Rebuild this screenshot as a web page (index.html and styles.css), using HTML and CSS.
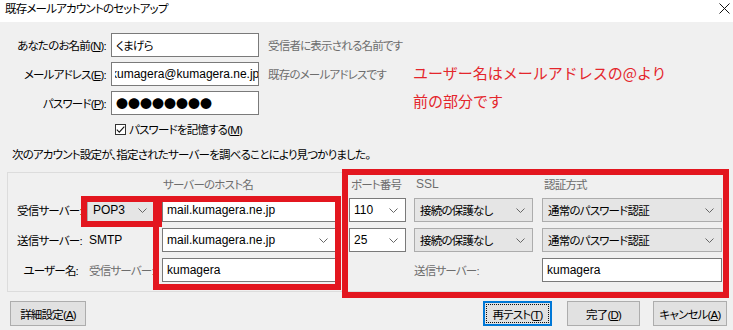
FILE: index.html
```html
<!DOCTYPE html>
<html lang="ja">
<head>
<meta charset="utf-8">
<title>既存メールアカウントのセットアップ</title>
<link rel="stylesheet" href="styles.css">
</head>
<body>
<div class="titlebar">
  <span class="title ja">既存メールアカウントのセットアップ</span>
  <svg class="close" width="11" height="11" viewBox="0 0 11 11"><path d="M0.5 0.5L10.5 10.5M10.5 0.5L0.5 10.5" stroke="#111" stroke-width="1"/></svg>
</div>
<div class="content">
  <div class="identity">
    <label class="lbl ja">あなたのお名前(<u>N</u>):</label>
    <div class="field"><span class="ja">くまげら</span></div>
    <span class="hint ja">受信者に表示される名前です</span>
    <label class="lbl ja">メールアドレス(<u>E</u>):</label>
    <div class="field email"><span class="clip"><span class="scrolled">kumagera@kumagera.ne.jp</span></span></div>
    <span class="hint ja">既存のメールアドレスです</span>
    <label class="lbl ja">パスワード(<u>P</u>):</label>
    <div class="field dots">●●●●●●●●</div>
    <span></span>
  </div>
  <div class="remember">
    <span class="check"><svg width="9" height="9" viewBox="0 0 9 9"><path d="M0.8 4.6L3.3 7.1L8.3 1.6" fill="none" stroke="#111" stroke-width="1.1"/></svg></span>
    <span class="ja">パスワードを記憶する(<u>M</u>)</span>
  </div>
  <p class="found ja">次のアカウント設定が、指定されたサーバーを調べることにより見つかりました。</p>
  <div class="panel">
    <span></span><span></span>
    <span class="head ja">サーバーのホスト名</span>
    <span class="head ja port-h">ポート番号</span>
    <span class="head ssl-h">SSL</span>
    <span class="head ja auth-h">認証方式</span>

    <span class="plbl ja">受信サーバー:</span>
    <div class="sel gray"><span>POP3</span><svg class="chev" width="9" height="5" viewBox="0 0 9 5"><path d="M0.5 0.5L4.5 4.5L8.5 0.5" fill="none" stroke="#666" stroke-width="1"/></svg></div>
    <div class="field host">mail.kumagera.ne.jp</div>
    <div class="sel white port"><span>110</span><svg class="chev" width="9" height="5" viewBox="0 0 9 5"><path d="M0.5 0.5L4.5 4.5L8.5 0.5" fill="none" stroke="#666" stroke-width="1"/></svg></div>
    <div class="sel gray ssl"><span class="ja">接続の保護なし</span><svg class="chev" width="9" height="5" viewBox="0 0 9 5"><path d="M0.5 0.5L4.5 4.5L8.5 0.5" fill="none" stroke="#666" stroke-width="1"/></svg></div>
    <div class="sel gray"><span class="ja">通常のパスワード認証</span><svg class="chev" width="9" height="5" viewBox="0 0 9 5"><path d="M0.5 0.5L4.5 4.5L8.5 0.5" fill="none" stroke="#666" stroke-width="1"/></svg></div>

    <span class="plbl ja">送信サーバー:</span>
    <span class="ptype">SMTP</span>
    <div class="sel white host"><span>mail.kumagera.ne.jp</span><svg class="chev" width="9" height="5" viewBox="0 0 9 5"><path d="M0.5 0.5L4.5 4.5L8.5 0.5" fill="none" stroke="#666" stroke-width="1"/></svg></div>
    <div class="sel white port"><span>25</span><svg class="chev" width="9" height="5" viewBox="0 0 9 5"><path d="M0.5 0.5L4.5 4.5L8.5 0.5" fill="none" stroke="#666" stroke-width="1"/></svg></div>
    <div class="sel gray ssl"><span class="ja">接続の保護なし</span><svg class="chev" width="9" height="5" viewBox="0 0 9 5"><path d="M0.5 0.5L4.5 4.5L8.5 0.5" fill="none" stroke="#666" stroke-width="1"/></svg></div>
    <div class="sel gray"><span class="ja">通常のパスワード認証</span><svg class="chev" width="9" height="5" viewBox="0 0 9 5"><path d="M0.5 0.5L4.5 4.5L8.5 0.5" fill="none" stroke="#666" stroke-width="1"/></svg></div>

    <span class="plbl ja">ユーザー名:</span>
    <span class="ptype ja muted">受信サーバー:</span>
    <div class="field host">kumagera</div>
    <span></span>
    <span class="ptype ja muted ssl-l">送信サーバー:</span>
    <div class="field">kumagera</div>
  </div>
  <div class="buttons">
    <button class="btn adv"><span class="ja">詳細設定(<u>A</u>)</span></button>
    <span class="spacer"></span>
    <button class="btn focus retest"><span class="ja">再テスト(<u>T</u>)</span></button>
    <button class="btn done"><span class="ja">完了(<u>D</u>)</span></button>
    <button class="btn cancel"><span class="ja">キャンセル(<u>A</u>)</span></button>
  </div>
</div>
<div class="note">ユーザー名はメールアドレスの@より<br>前の部分です</div>
<div class="mark m1"></div>
<div class="mark m2"></div>
<div class="mark m3"></div>
</body>
</html>
```

FILE: styles.css
```css
* { box-sizing: border-box; }
html, body { margin: 0; padding: 0; }
body {
  position: relative;
  width: 733px;
  height: 330px;
  overflow: hidden;
  background: #f0f0f0;
  color: #000;
  font-family: "Liberation Sans", "Noto Sans CJK JP", sans-serif;
  font-size: 12px;
}
u { text-decoration: underline; text-underline-offset: 1px; }

.ja {
  font-size: 11.5px;
  letter-spacing: -0.8px;
  font-feature-settings: "palt";
}

.titlebar {
  height: 22px;
  background: #fff;
  display: flex;
  align-items: center;
  justify-content: space-between;
  padding: 0 3px 0 5px;
}
.title { line-height: 16px; margin-top: -4px; }
.close { margin-top: -5px; }

.content { padding: 11px 5px 0 7px; }

.identity {
  display: grid;
  grid-template-columns: 100px 148px auto;
  grid-auto-rows: 24px;
  column-gap: 4px;
  row-gap: 5px;
  align-items: center;
}
.lbl { text-align: right; white-space: nowrap; padding-right: 1px; }
.hint { color: #6d6d6d; margin-left: 5px; }

.field {
  height: 24px;
  background: #fff;
  border: 1px solid #7a7a7a;
  display: flex;
  align-items: center;
  padding-left: 4px;
  overflow: hidden;
  white-space: nowrap;
}
.field.email { padding-left: 3px; }
.clip { display: flex; overflow: hidden; flex: 1; }
.scrolled { margin-left: -4px; white-space: nowrap; }
.dots {
  font-family: "Noto Sans CJK JP", sans-serif;
  font-size: 12px;
  padding-left: 4px;
}

.remember {
  display: flex;
  align-items: center;
  height: 18px;
  margin: 5px 0 0 108px;
  gap: 3px;
}
.check {
  width: 11px;
  height: 11px;
  border: 1px solid #333;
  background: #fff;
  display: flex;
  align-items: center;
  justify-content: center;
}

.found { margin: 8px 0 0 5px; line-height: 18px; }

.panel {
  margin-top: 8px;
  border: 1px solid #dcdcdc;
  padding: 3px 5px 9px 9px;
  display: grid;
  grid-template-columns: 63px 68px 180px 57px 122px 180px;
  grid-template-rows: 16px 24px 24px 24px;
  column-gap: 7px;
  row-gap: 6px;
  align-items: center;
}
.head { color: #6d6d6d; white-space: nowrap; padding-left: 1px; }
.port-h { padding-left: 2px; }
.ssl-h { padding-left: 3px; }
.auth-h { padding-left: 2px; }
.plbl { text-align: right; padding-right: 2px; white-space: nowrap; }
.ptype { padding-left: 2px; white-space: nowrap; }
.muted { color: #6d6d6d; }
.ssl-l { padding-left: 1px; }
.host { width: 174px; }

.sel {
  height: 24px;
  display: flex;
  align-items: center;
  justify-content: space-between;
  padding: 0 7px 0 5px;
  white-space: nowrap;
}
.sel.gray { background: #e5e5e5; border: 1px solid #acacac; }
.sel.white { background: #fff; border: 1px solid #7a7a7a; padding-left: 4px; }
.sel.ssl { margin-left: 1px; width: 119px; }
.chev { flex: none; }

.buttons {
  display: flex;
  align-items: center;
  margin-top: 9px;
  padding-left: 3px;
  padding-right: 1px;
}
.spacer { flex: 1; }
.btn {
  height: 25px;
  border: 1px solid #adadad;
  background: #e1e1e1;
  font: inherit;
  color: #000;
  padding: 0;
  position: relative;
}
.adv { width: 76px; }
.retest { width: 69px; }
.done { width: 73px; margin-left: 15px; }
.cancel { width: 74px; margin-left: 13px; }
.btn.focus {
  border: 1px solid #0078d7;
  box-shadow: inset 0 0 0 1px #0078d7;
}
.btn.focus::after {
  content: "";
  position: absolute;
  inset: 2px;
  border: 1px dotted #111;
}

.note {
  position: absolute;
  left: 413px;
  top: 59px;
  color: #e4262c;
  font-family: "Noto Sans CJK JP", sans-serif;
  font-size: 15px;
  line-height: 28px;
  white-space: nowrap;
}

.mark {
  position: absolute;
  border: 6px solid #e3161f;
  pointer-events: none;
}
.m1 { left: 81px; top: 196px; width: 81px; height: 31px; }
.m2 { left: 153px; top: 196px; width: 188px; height: 94px; }
.m3 { left: 342px; top: 169px; width: 387px; height: 129px; }
```
